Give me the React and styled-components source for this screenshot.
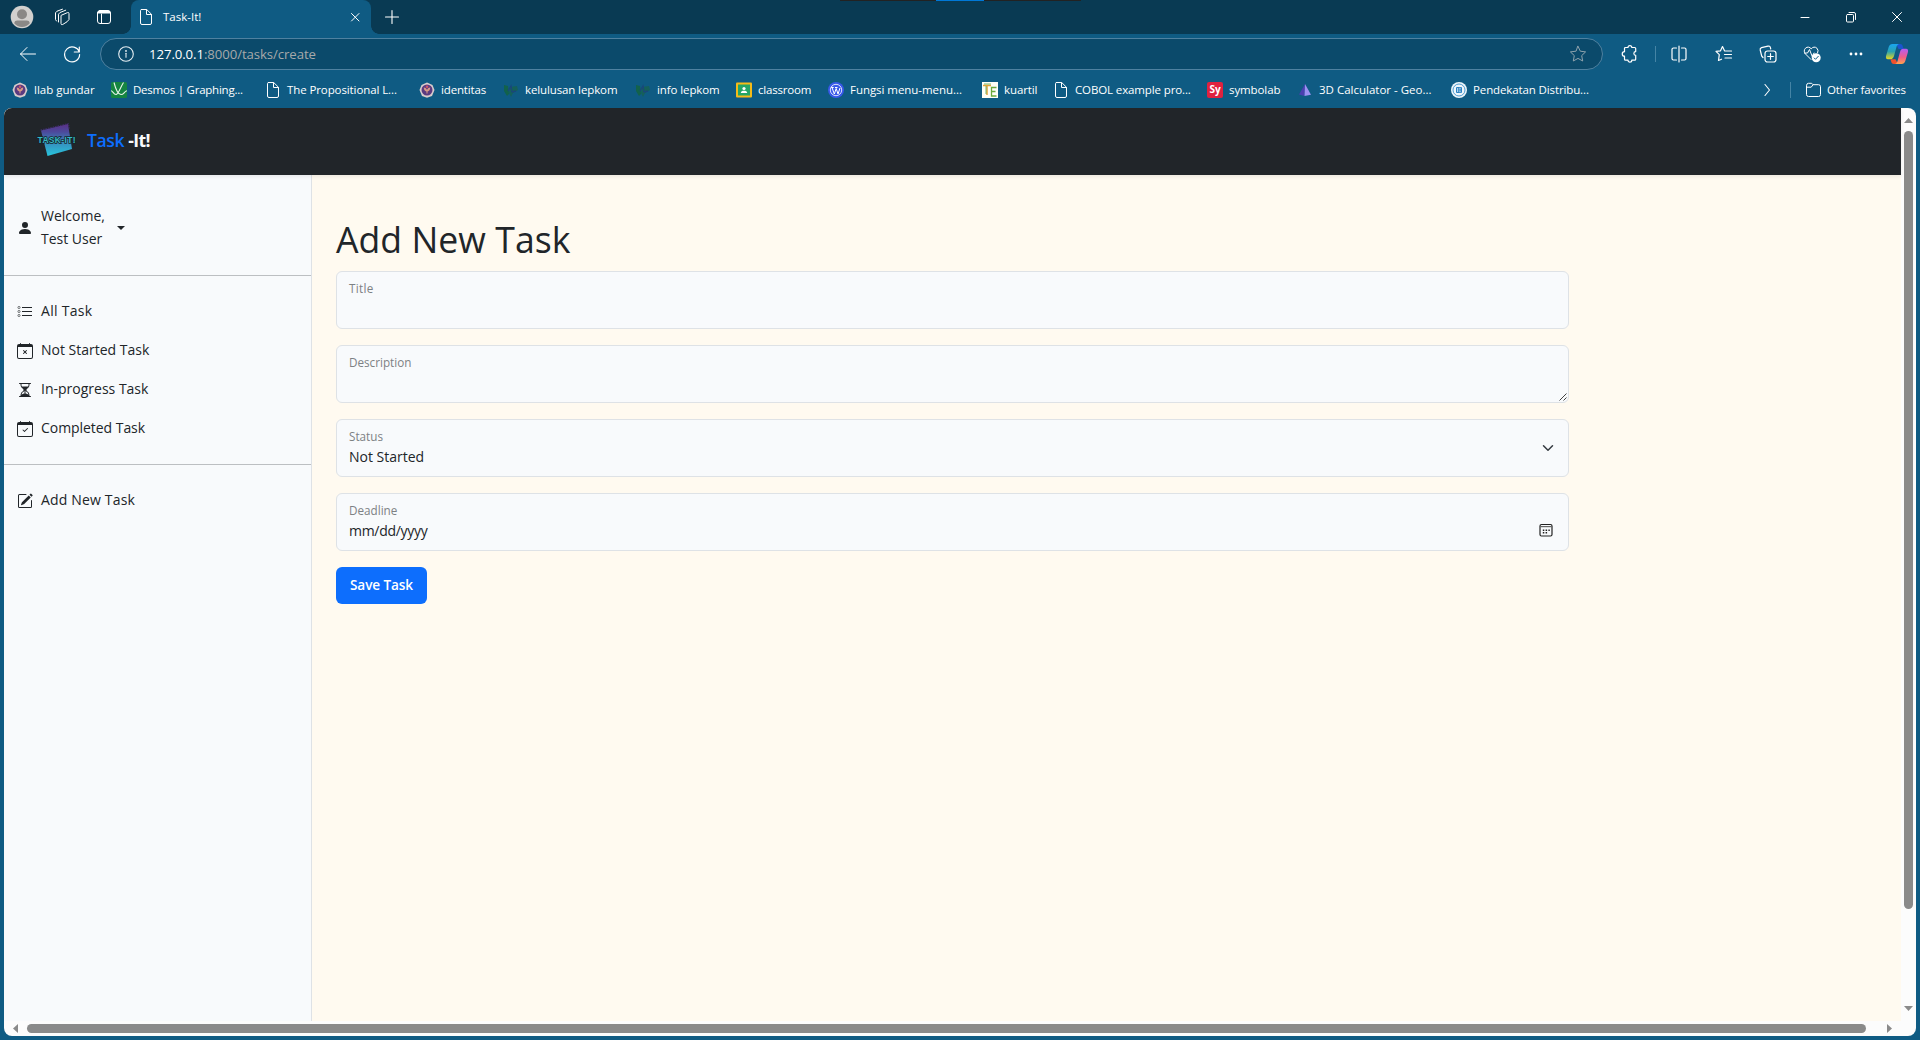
import React from "react";
import styled, { createGlobalStyle } from "styled-components";
import {
  BsPersonFill,
  BsCalendarX,
  BsCalendarCheck,
  BsHourglassSplit,
  BsPencilSquare,
} from "react-icons/bs";

const GlobalStyle = createGlobalStyle`
  *, *::before, *::after { box-sizing: border-box; }
  body {
    margin: 0;
    overflow: hidden;
    background: #0f5b83;
    font-family: "Open Sans", "Noto Sans", sans-serif;
  }
  svg { display: block; flex: none; }
`;

/* ---------- browser frame ---------- */

const Window = styled.div`
  width: 1920px;
  height: 1040px;
  display: flex;
  flex-direction: column;
  background: #0f5b83;
  overflow: hidden;
`;

const TitleBar = styled.header`
  position: relative;
  height: 34px;
  flex: none;
  display: flex;
  background: #093a53;
  color: #fff;
`;

const DragHandle = styled.div`
  position: absolute;
  top: 0;
  left: 840px;
  width: 241px;
  height: 1px;
  background: linear-gradient(90deg, #222 0 96px, #0078d7 96px 144px, #222 144px);
`;

const TitleTools = styled.div`
  width: 131px;
  display: flex;
  align-items: center;
  padding-left: 10px;
`;

const Slot = styled.div`
  width: ${(p) => p.$w}px;
  height: ${(p) => p.$h || 34}px;
  flex: none;
  display: flex;
  align-items: center;
  justify-content: center;
  color: ${(p) => p.$color || "#fff"};
`;

const Tab = styled.div`
  position: relative;
  width: 240px;
  height: 34px;
  display: flex;
  align-items: center;
  padding: 0 9px 0 7px;
  background: #0f5b83;
  border-radius: 8px 8px 0 0;

  &::before,
  &::after {
    content: "";
    position: absolute;
    bottom: 0;
    width: 8px;
    height: 8px;
  }
  &::before {
    left: -8px;
    background: radial-gradient(circle at 0 0, transparent 7.5px, #0f5b83 8px);
  }
  &::after {
    right: -8px;
    background: radial-gradient(circle at 100% 0, transparent 7.5px, #0f5b83 8px);
  }
`;

const TabTitle = styled.span`
  flex: 1;
  padding-left: 9px;
  font-size: 11.5px;
  line-height: 33px;
  height: 34px;
  letter-spacing: 0;
`;

const Controls = styled.div`
  margin-left: auto;
  display: flex;
`;

const Toolbar = styled.div`
  height: 40px;
  flex: none;
  display: flex;
  align-items: center;
`;

const NavButtons = styled.div`
  width: 100px;
  display: flex;
  padding-left: 6px;
`;

const AddressBar = styled.div`
  width: 1503px;
  height: 32px;
  display: flex;
  align-items: center;
  padding: 0 15px 0 17px;
  border: 1px solid #4f81a0;
  border-radius: 16px;
  background: #0b4a6b;
  color: #e6eef2;
`;

const Url = styled.span`
  flex: 1;
  padding-left: 15px;
  font-size: 13.2px;
  line-height: 20px;
  letter-spacing: -0.08px;
  color: #a6a9aa;
`;

const Host = styled.span`
  color: #fff;
`;

const Rule = styled.div`
  width: 1px;
  height: 16px;
  background: #4584a5;
`;

const Bookmarks = styled.nav`
  height: 34px;
  flex: none;
  display: flex;
  align-items: center;
  padding: 0 0 2px 12px;
  color: #fff;
`;

const Bookmark = styled.div`
  width: ${(p) => p.$w}px;
  display: flex;
  align-items: center;
  gap: 6px;
  flex: none;
  font-size: 11.5px;
  line-height: 18px;
  letter-spacing: ${(p) => p.$ls ?? -0.23}px;
  white-space: nowrap;
`;

const BookmarkEnd = styled.div`
  margin-left: auto;
  display: flex;
  align-items: center;
`;

const OtherFavorites = styled(Bookmark)`
  margin-left: 14px;
  gap: 5px;
`;

const Viewport = styled.div`
  width: 1912px;
  height: 928px;
  margin-left: 4px;
  display: grid;
  grid-template: 913px 15px / 1897px 15px;
  background: #fcfcfc;
  border-radius: 8px;
  overflow: hidden;
`;

const VScroll = styled.div`
  display: flex;
  flex-direction: column;
  align-items: center;
  padding: 10px 0 10px;
  grid-row: 1;
  grid-column: 2;
`;

const VThumb = styled.div`
  width: 9px;
  height: 778px;
  margin: 8px 0 auto;
  border-radius: 5px;
  background: #8a8a8a;
`;

const HScroll = styled.div`
  display: flex;
  align-items: center;
  padding: 0 9px;
`;

const HThumb = styled.div`
  width: 1839px;
  height: 9px;
  margin: 0 auto 0 9px;
  border-radius: 5px;
  background: #8a8a8a;
`;

/* ---------- web page ---------- */

const Page = styled.div`
  display: flex;
  flex-direction: column;
  background: #fffaf0;
`;

const Navbar = styled.div`
  position: relative;
  height: 67px;
  flex: none;
  display: flex;
  align-items: center;
  padding: 0 0 4px 32px;
  background: #212529;
  box-shadow: 0 2px 4px rgba(0, 0, 0, 0.075);
`;

const Brand = styled.div`
  padding-left: 9px;
  font-size: 17.6px;
  line-height: 26px;
  font-weight: 700;
  letter-spacing: -0.6px;
  color: #f8fafc;
  white-space: pre;
`;

const BrandAccent = styled.span`
  font-weight: 600;
  letter-spacing: -0.4px;
  color: #0d6efd;
`;

const Body = styled.div`
  flex: 1;
  display: flex;
`;

const Sidebar = styled.aside`
  width: 308px;
  flex: none;
  display: flex;
  flex-direction: column;
  background: #f8fafc;
  border-right: 1px solid #dee2e6;
  color: #212529;
`;

const UserMenu = styled.div`
  height: 100px;
  display: flex;
  align-items: center;
  gap: 8px;
  padding: 6px 0 0 13px;
`;

const UserName = styled.div`
  width: 68px;
  padding-bottom: 2px;
  font-size: 14px;
  line-height: 23px;
`;

const Caret = styled.span`
  border: 4px solid transparent;
  border-top-color: #212529;
  border-bottom: 0;
`;

const NavGroup = styled.nav`
  display: flex;
  flex-direction: column;
  padding: 15px 0 17px;
  border-top: 1px solid #bcbfc2;
`;

const NavItem = styled.div`
  height: 39px;
  display: flex;
  align-items: center;
  gap: 8px;
  padding-left: 13px;
  font-size: 14px;
  line-height: 23px;
  letter-spacing: ${(p) => p.$ls || 0}px;

  svg { position: relative; top: 1px; }
`;

const Main = styled.main`
  padding: 41px 0 0 24px;
  color: #212529;
`;

const Heading = styled.h1`
  margin: 0 0 9px;
  font-size: 35.6px;
  line-height: 46px;
  font-weight: 400;
  letter-spacing: 0.05px;
`;

const Form = styled.form`
  width: 1233px;
  display: flex;
  flex-direction: column;
  align-items: stretch;
  gap: 16px;
`;

const Field = styled.div`
  height: 58px;
  display: flex;
  justify-content: space-between;
  padding: ${(p) => p.$pad || "0 15px 0 12px"};
  border: 1px solid #dee2e6;
  border-radius: 6px;
  background: #f8fafc;
`;

const FieldText = styled.div`
  display: flex;
  flex-direction: column;
  padding-top: 6px;
`;

const Label = styled.label`
  font-size: 11.7px;
  line-height: 20px;
  letter-spacing: ${(p) => p.$ls || 0}px;
  color: #7d8184;
`;

const Value = styled.span`
  font-size: 14px;
  line-height: 21px;
  letter-spacing: ${(p) => p.$ls || 0}px;
`;

const Adornment = styled.span`
  display: flex;
  align-self: ${(p) => p.$align || "center"};
  padding-bottom: ${(p) => p.$bottom || 0}px;
`;

const SaveButton = styled.button`
  align-self: flex-start;
  width: 91px;
  height: 37px;
  padding: 0 0 2px;
  border: 0;
  border-radius: 6px;
  background: #0d6efd;
  color: #fff;
  font: 600 13.6px/22px "Open Sans", "Noto Sans", sans-serif;
  letter-spacing: -0.1px;
`;

/* ---------- icons ---------- */

const Line = ({ w = 16, h = w, box, sw = 1, children }) => (
  <svg
    width={w}
    height={h}
    viewBox={box || `0 0 ${w} ${h}`}
    fill="none"
    stroke="currentColor"
    strokeWidth={sw}
    strokeLinecap="round"
    strokeLinejoin="round"
  >
    {children}
  </svg>
);

const Avatar = () => (
  <svg width="24" height="24" viewBox="0 0 24 24">
    <circle cx="12" cy="12" r="11.3" fill="#d2d0ce" />
    <circle cx="12" cy="9.3" r="5" fill="#8a8886" />
    <path d="M4.2 18.2c.3-2 1.500-2.700 3-2.700h9.600c1.500 0 2.700.7 3 2.700a10 10 0 0 1-15.600 0z" fill="#8a8886" />
  </svg>
);

const Workspaces = () => (
  <Line w={18}>
    <path d="M8.500 7.200 14.500 4.600q1.500-.5 1.500 1v5.900l-2 2.300-4.300 2.700q-1.700.7-1.700-1V8.200z" />
    <path d="M5.500 14V6.200L7 4.500 12.700 2.200M3.500 13 2.500 11.500V4.800L4 3.200 9.500 1.200" />
  </Line>
);

const TabPane = () => (
  <Line w={16}>
    <rect x="1.500" y="1.500" width="13" height="13" rx="2.500" />
    <path d="M2 4h12V3l-1-1H3L2 3z" fill="currentColor" />
    <path d="M5.500 5v9.500" />
  </Line>
);

const Doc = () => (
  <Line w={16}>
    <path d="M3.500.5h5.200l4.800 4.800v8.700a1.500 1.500 0 0 1-1.500 1.500H4A1.500 1.500 0 0 1 2.500 14V1.500a1 1 0 0 1 1-1zM8.500.8v4.700h4.800" />
  </Line>
);

const Crest = () => (
  <svg width="16" height="16" viewBox="0 0 16 16">
    <path d="M8 .5 13.500 3 15.500 8 13 14 8 15.800 3 14 .5 8 2.500 3z" fill="#d9cccc" />
    <circle cx="8" cy="8" r="5.500" fill="#5b3a80" />
    <path d="M4.800 5.500c1.800.2 2.600 1 3.200 2.500.6-1.500 1.400-2.300 3.200-2.500-.1 2.500-1 3.700-2.700 4v2h-1v-2c-1.700-.3-2.600-1.500-2.700-4z" fill="#d99a86" />
    <circle cx="8" cy="4.700" r="1.300" fill="#c9566a" />
  </svg>
);

const Desmos = () => (
  <svg width="16" height="16" viewBox="0 0 16 16">
    <rect width="16" height="16" rx="1.500" fill="#158541" />
    <path d="M0 8.800c1.800 0 2.500 3.700 5 3.700S9.500 5 12.500.5M3 .5c1.500 6 3.500 12 7 12 3 0 3-3 6-3.700" fill="none" stroke="#e9f5ec" strokeWidth="1.100" />
  </svg>
);

const Pulse = () => (
  <svg width="16" height="16" viewBox="0 0 16 16">
    <path d="M1 3 5 4l1 8-2 2-3-5z" fill="#12624b" />
    <path d="M7 5l7-1 1 4-5 3-2 4-2-4z" fill="#15605a" />
    <path d="M5 9l3-5 1 6 4-1" fill="none" stroke="#1a467b" strokeWidth="1.300" />
  </svg>
);

const Classroom = () => (
  <svg width="16" height="16" viewBox="0 0 16 16">
    <rect y=".5" width="16" height="15" rx="1" fill="#f5bb18" />
    <rect x="2" y="2.500" width="12" height="11" fill="#23a566" />
    <circle cx="8" cy="6.500" r="1.600" fill="#fff" />
    <path d="M4.800 11c0-1.700 1.500-2.200 3.200-2.200s3.200.5 3.200 2.200z" fill="#fff" />
  </svg>
);

const WordPress = () => (
  <svg width="16" height="16" viewBox="0 0 16 16">
    <circle cx="8" cy="8" r="8" fill="#3858e9" />
    <circle cx="8" cy="8" r="5.700" fill="none" stroke="#fff" strokeWidth=".8" />
    <path d="M4 5.500 6.300 12 8.200 6.500 10 12 12 6M3.200 5.500h2.500M7 5.500h2.500" fill="none" stroke="#fff" strokeWidth="1" />
  </svg>
);

const Kuartil = () => (
  <svg width="16" height="16" viewBox="0 0 16 16">
    <rect width="16" height="16" fill="#fffef7" />
    <path d="M1 3.500h8M5 3.500V13" stroke="#e3a43a" strokeWidth="1.500" />
    <path d="M2 2h7M4 4v8" stroke="#54a64c" strokeWidth=".8" />
    <path d="M14.500 5.500H9.500v8.500h5M9.500 9.500h4" fill="none" stroke="#6aa93c" strokeWidth="1.300" />
  </svg>
);

const SymbolabIcon = styled.span`
  width: 16px;
  height: 16px;
  border-radius: 2px;
  background: #e0213f;
  font: 700 10px/15px "Open Sans", sans-serif;
  letter-spacing: -0.2px;
  text-align: center;
`;

const Pyramid = () => (
  <svg width="16" height="16" viewBox="0 0 16 16">
    <path d="M8 2 2 12.500 7.500 14z" fill="#4a3fb0" />
    <path d="M8 2 7.500 14 14 12.700z" fill="#9c91f2" />
  </svg>
);

const Seal = () => (
  <svg width="16" height="16" viewBox="0 0 16 16">
    <circle cx="8" cy="8" r="8" fill="#eef6fb" />
    <circle cx="8" cy="8" r="6" fill="none" stroke="#4d9bd0" strokeWidth="1" />
    <rect x="5" y="5" width="6" height="6" rx="1" fill="#2b83c4" />
    <path d="M6.700 6v4M8.300 6.300h1.400M8.300 8h1.200M8.300 9.700h1.400" stroke="#fff" strokeWidth=".8" />
  </svg>
);

const Folder = () => (
  <Line w={17} h={16}>
    <path d="M1.500 4v8.500a2 2 0 0 0 2 2h10a2 2 0 0 0 2-2V4.700a2 2 0 0 0-2-2H8L6.700 1.300H3.500a2 2 0 0 0-2 2zM1.500 5.200h4.700L8 2.800" />
  </Line>
);

const Copilot = () => (
  <svg width="24" height="22" viewBox="0 0 24 22">
    <defs>
      <linearGradient id="cpA" x1="0" y1="0" x2="0" y2="1">
        <stop offset="0" stopColor="#19a5f0" />
        <stop offset=".5" stopColor="#2aa3b0" />
        <stop offset="1" stopColor="#e9d81d" />
      </linearGradient>
      <linearGradient id="cpB" x1="0" y1="0" x2="0" y2="1">
        <stop offset="0" stopColor="#b45cf5" />
        <stop offset=".55" stopColor="#ef5d8a" />
        <stop offset="1" stopColor="#ffa24d" />
      </linearGradient>
    </defs>
    <path d="M11 1h4c2 0 2.500 1.200 3 3l.6 2h-5z" fill="#1b54cf" />
    <path d="M7.500 1H14c-1.700.5-2.300 2-2.800 4L9 13c-.6 2-1.500 3.200-3.500 3.200H3c-2 0-2.400-1.700-1.900-3.500L3.700 4C4.400 2 5.500 1 7.500 1z" fill="url(#cpA)" />
    <path d="M13 21H9c-2 0-2.500-1.200-3-3l-.5-1.800h5z" fill="#f0512c" />
    <path d="M16.500 21H10c1.700-.5 2.300-2 2.800-4L15 9c.6-2 1.500-3.200 3.500-3.200H21c2 0 2.400 1.700 1.900 3.500L20.300 18c-.7 2-1.800 3-3.800 3z" fill="url(#cpB)" />
  </svg>
);

const Heartbeat = () => (
  <Line w={20}>
    <path d="M9 15.500 3.500 10a4 4 0 0 1 0-5.800c1.800-1.700 4.200-1.300 5.700.6 1.500-1.900 4-2.300 5.700-.6a4 4 0 0 1 .8 4.500M2.500 9h3L7.500 5.500l2.700 7 1.800-3.500" />
    <circle cx="14.200" cy="13.700" r="4.500" fill="#fff" stroke="none" />
    <path d="M12.200 14l1.300 1.300 2.800-3" stroke="#0f5b83" />
  </Line>
);

const NumberedList = () => (
  <svg width="16" height="16" viewBox="0 0 16 16" fill="none" stroke="currentColor">
    <path d="M5 3.500h10M5 7.500h10M5 11.500h10" />
    <g strokeWidth=".6">
      <circle cx="2" cy="3.500" r="1.100" />
      <circle cx="2" cy="7.500" r="1.100" />
      <circle cx="2" cy="11.500" r="1.100" />
    </g>
  </svg>
);

const DateIcon = () => (
  <svg width="14" height="14" viewBox="0 0 14 14" fill="none" stroke="#222">
    <rect x="1" y="1.500" width="12" height="11.500" rx="1.500" strokeWidth="1.200" />
    <path d="M1 3.600h12" strokeWidth="1.200" stroke="#666" />
    <path d="M3.800 7.200h7M3.800 9.800h4.500" strokeWidth="1.500" strokeDasharray="1.500 1.300" />
  </svg>
);

const Logo = () => (
  <svg width="42" height="36" viewBox="0 0 42 36" overflow="visible">
    <defs>
      <linearGradient id="lg" x1="0" y1="0" x2="0" y2="1">
        <stop offset="0" stopColor="#5a2f86" />
        <stop offset=".25" stopColor="#4c4a9c" />
        <stop offset=".6" stopColor="#3790bf" />
        <stop offset="1" stopColor="#27c6dc" />
      </linearGradient>
    </defs>
    <path d="M5 8.500 32 2l4 25L11.500 34z" fill="url(#lg)" />
    <path d="M4.500 8 32.500 1.500l.8 5" fill="none" stroke="#45307a" strokeDasharray="1.500 1" strokeWidth=".8" />
    <text
      x="1.500"
      y="20.500"
      textLength="38"
      lengthAdjust="spacing"
      fontFamily="Liberation Sans, sans-serif"
      fontWeight="700"
      fontSize="8.500"
      fill="#35b9c4"
      stroke="#14242c"
      strokeWidth="1.400"
      paintOrder="stroke"
    >
      TASK-IT!
    </text>
  </svg>
);

const bookmarks = [
  { icon: <Crest />, text: "llab gundar", w: 99, ls: 0 },
  { icon: <Desmos />, text: "Desmos | Graphing...", w: 154 },
  { icon: <Doc />, text: "The Propositional L...", w: 154, ls: -0.1 },
  { icon: <Crest />, text: "identitas", w: 84, ls: -0.15 },
  { icon: <Pulse />, text: "kelulusan lepkom", w: 132, ls: -0.12 },
  { icon: <Pulse />, text: "info lepkom", w: 101, ls: -0.1 },
  { icon: <Classroom />, text: "classroom", w: 92, ls: -0.2 },
  { icon: <WordPress />, text: "Fungsi menu-menu...", w: 154, ls: -0.05 },
  { icon: <Kuartil />, text: "kuartil", w: 71, ls: -0.1 },
  { icon: <Doc />, text: "COBOL example pro...", w: 154, ls: -0.12 },
  { icon: <SymbolabIcon>Sy</SymbolabIcon>, text: "symbolab", w: 90, ls: -0.1 },
  { icon: <Pyramid />, text: "3D Calculator - Geo...", w: 154, ls: 0 },
  { icon: <Seal />, text: "Pendekatan Distribu...", w: 154, ls: -0.12 },
];

const Chrome = () => (
  <>
    <TitleBar>
      <TitleTools>
        <Slot $w={24}><Avatar /></Slot>
        <Slot $w={56}><Workspaces /></Slot>
        <Slot $w={28}><TabPane /></Slot>
      </TitleTools>
      <Tab>
        <Doc />
        <TabTitle>Task-It!</TabTitle>
        <Line w={14}><path d="M3.500 3.500l7.500 7.500M11 3.500l-7.500 7.500" /></Line>
      </Tab>
      <Slot $w={42}><Line w={16} sw={1.1}><path d="M8 1.500v13M1.500 8h13" /></Line></Slot>
      <Controls>
        <Slot $w={46}><Line w={12}><path d="M2 6.500h8" /></Line></Slot>
        <Slot $w={46}>
          <Line w={12}>
            <rect x="1.500" y="3.500" width="7" height="7.500" rx="1" />
            <path d="M4 1.500h5a1.500 1.500 0 0 1 1.500 1.500v5.500" />
          </Line>
        </Slot>
        <Slot $w={46}><Line w={12}><path d="M1.500 1.500l9 9M10.500 1.500l-9 9" /></Line></Slot>
      </Controls>
      <DragHandle />
    </TitleBar>

    <Toolbar>
      <NavButtons>
        <Slot $w={44}><Line w={18}><path d="M16.500 9h-15M8 2.500 1.500 9 8 15.500" /></Line></Slot>
        <Slot $w={44}>
          <Line w={18} sw={1.200}>
            <path d="M16.200 7A7.500 7.500 0 1 0 16.600 9.500M16.300 2v5h-5" />
          </Line>
        </Slot>
      </NavButtons>
      <AddressBar>
        <Line w={16} sw={1.100}>
          <circle cx="8" cy="8" r="7.300" />
          <path d="M8 7.300v4" />
          <circle cx="8" cy="4.900" r=".4" fill="currentColor" />
        </Line>
        <Url><Host>127.0.0.1</Host>:8000/tasks/create</Url>
        <Slot $w={18} $h={30} $color="#8fa3ad">
          <Line w={18}>
            <path d="M9 1.300l2.300 4.900 5.300.7-3.900 3.700 1 5.400L9 13.400 4.300 16l1-5.400L1.400 6.900l5.300-.7z" />
          </Line>
        </Slot>
      </AddressBar>
      <Slot $w={52}>
        <Line w={18} box="-1 0 18 18" sw={1.200}>
          <path d="M4.500 2.500H7a1.900 1.900 0 0 1 3.800 0H13.700a1 1 0 0 1 1 1V6.600a1.800 1.800 0 0 0 0 3.700v3.900a1 1 0 0 1-1 1h-2.900a1.900 1.900 0 0 1-3.800 0H4.500a1 1 0 0 1-1-1v-3a2.200 2.200 0 0 1 0-4.500V3.500a1 1 0 0 1 1-1z" />
        </Line>
      </Slot>
      <Rule />
      <Slot $w={46}>
        <Line w={18} sw={1.200}>
          <path d="M6.500 3H3.500A1.500 1.500 0 0 0 2 4.500v9A1.500 1.500 0 0 0 3.500 15h3M11.500 3h3A1.500 1.500 0 0 1 16 4.500v9a1.500 1.500 0 0 1-1.500 1.500h-3M9 1v16" />
        </Line>
      </Slot>
      <Slot $w={43}>
        <Line w={18} sw={1.200}>
          <path d="M11 6 9.500 5.800 7.500 1.500 5.500 5.800 1 6.400 4.300 9.700 3.500 15.500 6.500 14.200M11.500 6h5M9.500 9.500h7M10 13h6.500" />
        </Line>
      </Slot>
      <Slot $w={45}>
        <Line w={18} sw={1.200}>
          <rect x="6" y="6" width="11" height="11" rx="2.500" />
          <path d="M11.500 8.700v5.600M8.700 11.500h5.600M4 12.500 2.700 11 1.200 5A2 2 0 0 1 2.500 2.600L9 1.100a2 2 0 0 1 2.400 1.500L11.700 4" />
        </Line>
      </Slot>
      <Slot $w={44}><Heartbeat /></Slot>
      <Slot $w={43}>
        <svg width="16" height="4" fill="#fff">
          <circle cx="3" cy="2" r="1.400" /><circle cx="8" cy="2" r="1.400" /><circle cx="13" cy="2" r="1.400" />
        </svg>
      </Slot>
      <Slot $w={40}><Copilot /></Slot>
    </Toolbar>

    <Bookmarks>
      {bookmarks.map((b) => (
        <Bookmark key={b.text} $w={b.w} $ls={b.ls}>{b.icon}{b.text}</Bookmark>
      ))}
      <BookmarkEnd>
        <Slot $w={46} $h={20}><Line w={10} h={14} sw={1.100}><path d="M3 1.500l4.500 5.500L3 12.500" /></Line></Slot>
        <Rule />
        <OtherFavorites $w={115} $ls={-0.13}><Folder />Other favorites</OtherFavorites>
      </BookmarkEnd>
    </Bookmarks>
  </>
);

const Arrow = ({ w, h, d }) => (
  <svg width={w} height={h} fill="#8a8a8a"><path d={d} /></svg>
);

const TaskPage = () => (
  <Page>
    <Navbar>
      <Logo />
      <Brand><BrandAccent>Task</BrandAccent> -It!</Brand>
    </Navbar>
    <Body>
      <Sidebar>
        <UserMenu>
          <Slot $w={16} $h={16} $color="#212529"><BsPersonFill size={16} /></Slot>
          <UserName>Welcome,<br />Test User</UserName>
          <Caret />
        </UserMenu>
        <NavGroup>
          <NavItem $ls={0.3}><NumberedList />All Task</NavItem>
          <NavItem><BsCalendarX size={16} />Not Started Task</NavItem>
          <NavItem><BsHourglassSplit size={16} />In-progress Task</NavItem>
          <NavItem $ls={-0.05}><BsCalendarCheck size={16} />Completed Task</NavItem>
        </NavGroup>
        <NavGroup>
          <NavItem $ls={0.17}><BsPencilSquare size={16} />Add New Task</NavItem>
        </NavGroup>
      </Sidebar>
      <Main>
        <Heading>Add New Task</Heading>
        <Form>
          <Field><FieldText><Label $ls={0.3}>Title</Label></FieldText></Field>
          <Field $pad="0 1px 0 12px">
            <FieldText><Label>Description</Label></FieldText>
            <Adornment $align="flex-end" $bottom={1}>
              <svg width="8" height="8" stroke="#444" fill="none"><path d="M.5 7.500l7-7M4.500 7.500l3-3" /></svg>
            </Adornment>
          </Field>
          <Field $pad="0 14px 0 12px">
            <FieldText><Label>Status</Label><Value>Not Started</Value></FieldText>
            <Adornment>
              <svg width="12" height="12" viewBox="0 0 16 16" fill="none" stroke="#343a40" strokeWidth="2" strokeLinecap="round" strokeLinejoin="round">
                <path d="m2 5 6 6 6-6" />
              </svg>
            </Adornment>
          </Field>
          <Field>
            <FieldText><Label>Deadline</Label><Value $ls={-0.3}>mm/dd/yyyy</Value></FieldText>
            <Adornment $align="flex-end" $bottom={13}><DateIcon /></Adornment>
          </Field>
          <SaveButton type="button">Save Task</SaveButton>
        </Form>
      </Main>
    </Body>
  </Page>
);

export default function App() {
  return (
    <Window>
      <GlobalStyle />
      <Chrome />
      <Viewport>
        <TaskPage />
        <VScroll>
          <Arrow w={9} h={5} d="M4.500 0 9 5H0z" />
          <VThumb />
          <Arrow w={9} h={5} d="M0 0h9L4.500 5z" />
        </VScroll>
        <HScroll>
          <Arrow w={5} h={9} d="M5 0v9L0 4.500z" />
          <HThumb />
          <Arrow w={5} h={9} d="M0 0v9l5-4.500z" />
        </HScroll>
      </Viewport>
    </Window>
  );
}
